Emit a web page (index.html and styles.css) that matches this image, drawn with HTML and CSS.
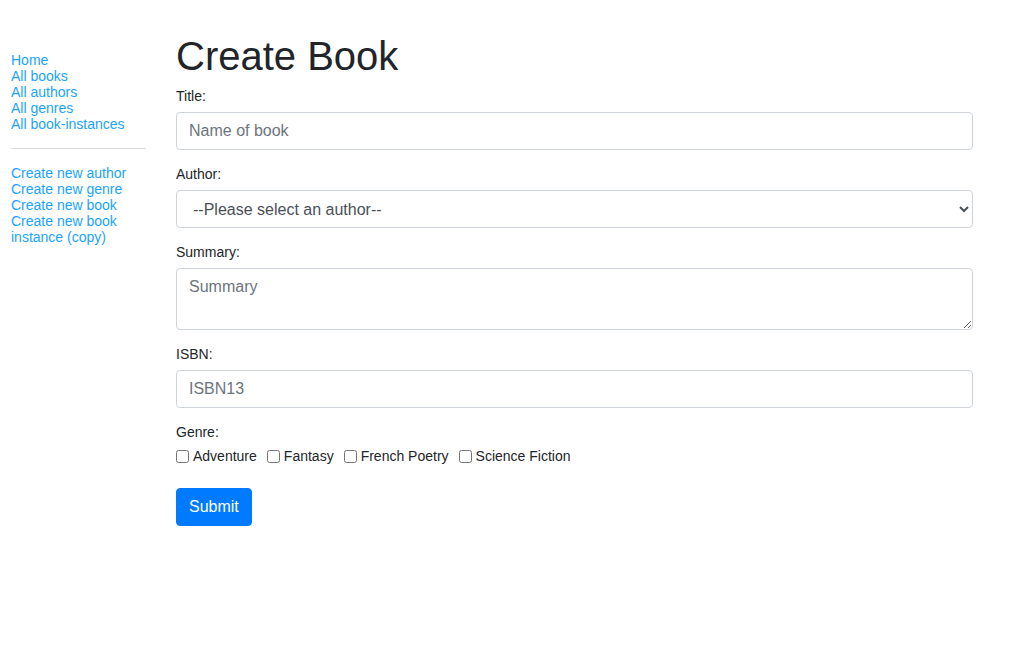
FILE: index.html
```html
<!DOCTYPE html>
<html lang="en">
<head>
<meta charset="utf-8">
<title>Create Book</title>
<link rel="stylesheet" href="styles.css">
</head>
<body>
<div class="page">
  <nav class="sidebar">
    <ul class="sidebar-nav">
      <li><a href="#">Home</a></li>
      <li><a href="#">All books</a></li>
      <li><a href="#">All authors</a></li>
      <li><a href="#">All genres</a></li>
      <li><a href="#">All book-instances</a></li>
    </ul>
    <hr class="divider">
    <ul class="sidebar-nav">
      <li><a href="#">Create new author</a></li>
      <li><a href="#">Create new genre</a></li>
      <li><a href="#">Create new book</a></li>
      <li><a href="#">Create new book instance (copy)</a></li>
    </ul>
  </nav>
  <main class="content">
    <h1 class="title">Create Book</h1>
    <form class="form">
      <div class="form-group">
        <label class="label" for="title">Title:</label>
        <input class="form-control" id="title" type="text" placeholder="Name of book">
      </div>
      <div class="form-group">
        <label class="label" for="author">Author:</label>
        <select class="form-control select" id="author">
          <option>--Please select an author--</option>
        </select>
      </div>
      <div class="form-group">
        <label class="label" for="summary">Summary:</label>
        <textarea class="form-control textarea" id="summary" placeholder="Summary"></textarea>
      </div>
      <div class="form-group">
        <label class="label" for="isbn">ISBN:</label>
        <input class="form-control" id="isbn" type="text" placeholder="ISBN13">
      </div>
      <div class="form-group genres">
        <span class="label">Genre:</span>
        <div class="checks">
          <label class="check"><input type="checkbox" class="checkbox">Adventure</label>
          <label class="check"><input type="checkbox" class="checkbox">Fantasy</label>
          <label class="check"><input type="checkbox" class="checkbox">French Poetry</label>
          <label class="check"><input type="checkbox" class="checkbox">Science Fiction</label>
        </div>
      </div>
      <button class="btn" type="submit">Submit</button>
    </form>
  </main>
</div>
</body>
</html>
```

FILE: styles.css
```css
html, body {
  margin: 0;
  padding: 0;
  background: #ffffff;
}

body {
  font-family: "Liberation Sans", Arial, sans-serif;
  font-size: 16px;
  color: #212529;
}

.page {
  display: flex;
  padding-top: 32px;
}

.sidebar {
  width: 135px;
  margin-left: 11px;
  flex: none;
}

.sidebar-nav {
  list-style: none;
  margin: 20px 0 0 0;
  padding: 0;
  font-size: 14px;
  line-height: 16px;
}

.sidebar-nav + .divider + .sidebar-nav {
  margin-top: 0;
}

.sidebar-nav a {
  color: #1aa3ff;
  text-decoration: none;
}

.divider {
  border: 0;
  border-top: 1px solid #dcdcdc;
  margin: 16px 0 16px 0;
  height: 0;
}

.content {
  margin-left: 30px;
  width: 797px;
}

.title {
  font-size: 40px;
  font-weight: 500;
  line-height: 48px;
  margin: 0 0 8px 0;
  color: #212529;
}

.form-group {
  margin-bottom: 16px;
}

.label {
  display: block;
  font-size: 14px;
  line-height: 16px;
  margin-bottom: 8px;
  color: #212529;
}

.form-control {
  display: block;
  box-sizing: border-box;
  width: 100%;
  height: 38px;
  padding: 6px 12px;
  font-family: "Liberation Sans", Arial, sans-serif;
  font-size: 16px;
  line-height: 24px;
  color: #495057;
  background: #ffffff;
  border: 1px solid #ced4da;
  border-radius: 4px;
  margin: 0;
}

.form-control::placeholder {
  color: #6c757d;
  opacity: 1;
}

.select {
  padding-left: 12px;
  padding-right: 10px;
}

.textarea {
  height: 62px;
  resize: vertical;
}

.genres {
  margin-bottom: 16px;
}

.checks {
  display: flex;
  height: 24px;
  align-items: flex-start;
  font-size: 14px;
  line-height: 16px;
}

.check {
  display: flex;
  align-items: center;
  margin-right: 10px;
}

.checkbox {
  width: 13px;
  height: 13px;
  margin: 0 4px 0 0;
}

.btn {
  display: inline-block;
  box-sizing: border-box;
  height: 38px;
  padding: 6px 12px;
  font-family: "Liberation Sans", Arial, sans-serif;
  font-size: 16px;
  line-height: 24px;
  color: #ffffff;
  background: #007bff;
  border: 1px solid #007bff;
  border-radius: 4px;
}
```
